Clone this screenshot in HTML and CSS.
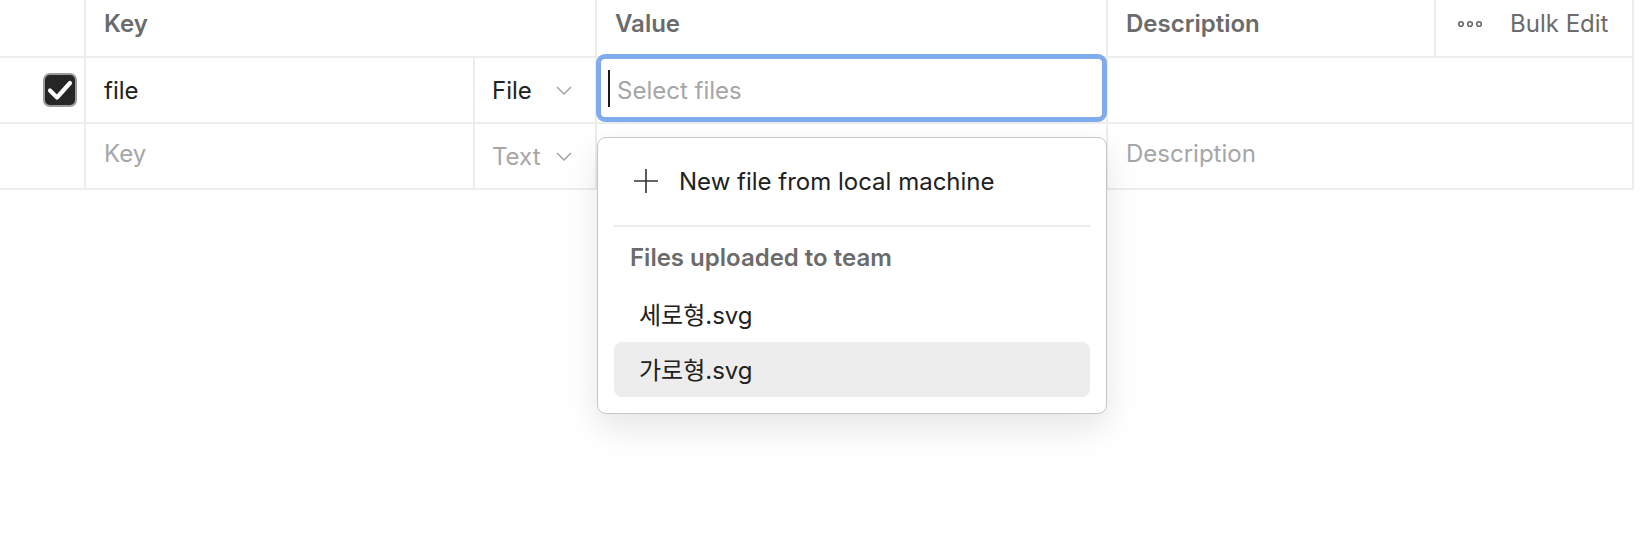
FILE: index.html
```html
<!DOCTYPE html>
<html lang="ko">
<head>
    <meta charset="UTF-8">
    <meta name="viewport" content="width=device-width, initial-scale=1.0">
    <title>Form data</title>
    <link rel="stylesheet" href="styles.css">
</head>
<body>
    <div class="params-table">
        <!-- header -->
        <div class="cell head check-col"></div>
        <div class="cell head span-2">Key</div>
        <div class="cell head">Value</div>
        <div class="cell head">Description</div>
        <div class="cell head bulk">
            <svg class="dots" width="26" height="8" viewBox="0 0 26 8">
                <circle cx="4" cy="4" r="2.3" />
                <circle cx="13" cy="4" r="2.3" />
                <circle cx="22" cy="4" r="2.3" />
            </svg>
            <span>Bulk Edit</span>
        </div>

        <!-- row 1 -->
        <div class="cell check-col">
            <span class="checkbox">
                <svg width="30" height="30" viewBox="0 0 30 30">
                    <path d="M5 15.5 L12 22.5 L25 8" />
                </svg>
            </span>
        </div>
        <div class="cell">file</div>
        <div class="cell type">
            <span>File</span>
            <svg class="chevron" width="16" height="9" viewBox="0 0 16 9"><path d="M1 1 L8 8 L15 1" /></svg>
        </div>
        <div class="cell value-cell">
            <div class="file-input">
                <span class="caret"></span>
                <span class="placeholder">Select files</span>
            </div>

            <div class="dropdown">
                <div class="dd-item new-file">
                    <svg class="plus" width="24" height="24" viewBox="0 0 24 24"><path d="M12 0 V24 M0 12 H24" /></svg>
                    <span>New file from local machine</span>
                </div>
                <div class="dd-sep"></div>
                <div class="dd-group">Files uploaded to team</div>
                <div class="dd-item file">세로형.svg</div>
                <div class="dd-item file active">가로형.svg</div>
            </div>
        </div>
        <div class="cell span-2"></div>

        <!-- row 2 (empty) -->
        <div class="cell check-col"></div>
        <div class="cell placeholder-cell">Key</div>
        <div class="cell type placeholder-cell">
            <span>Text</span>
            <svg class="chevron" width="16" height="9" viewBox="0 0 16 9"><path d="M1 1 L8 8 L15 1" /></svg>
        </div>
        <div class="cell"></div>
        <div class="cell span-2 placeholder-cell">Description</div>
    </div>
</body>
</html>
```

FILE: styles.css
```css
html, body {
    height: 100%;
}

body {
    margin: 0;
    padding: 0;
    background: #fff;
    font-family: Inter, "Noto Sans CJK KR", sans-serif;
    font-size: 24px;
    color: #212121;
}

.params-table {
    display: grid;
    grid-template-columns: 86px 389px 122px 511px 328px 198px;
    grid-template-rows: 58px 66px 66px;
    width: 1634px;
}

.cell {
    box-sizing: border-box;
    border-right: 2px solid #ededed;
    border-bottom: 2px solid #ededed;
    display: flex;
    align-items: center;
    padding-left: 18px;
}

.span-2 {
    grid-column: span 2;
}

.head {
    font-weight: 600;
    color: #6b6b6b;
    padding-bottom: 9px;
}

.check-col {
    justify-content: flex-end;
    padding: 0 7px 0 0;
}

.bulk {
    font-weight: 400;
    padding-left: 21px;
    gap: 27px;
}

.dots circle {
    fill: none;
    stroke: #6b6b6b;
    stroke-width: 1.6;
}

.checkbox {
    width: 34px;
    height: 34px;
    box-sizing: border-box;
    background: #262626;
    border: 2px solid #9b9b9b;
    border-radius: 7px;
    display: flex;
    align-items: center;
    justify-content: center;
}

.checkbox path {
    fill: none;
    stroke: #fff;
    stroke-width: 4.2;
    stroke-linecap: round;
    stroke-linejoin: round;
}

.type {
    padding-left: 17px;
    padding-right: 23px;
    justify-content: space-between;
}

.chevron path {
    fill: none;
    stroke: #a3a3a3;
    stroke-width: 1.5;
}

.placeholder-cell {
    color: #a6a6a6;
    padding-bottom: 5px;
}

.type.placeholder-cell {
    padding-bottom: 0;
}

.value-cell {
    position: relative;
}

/* focused input sits over the cell borders */
.file-input {
    position: absolute;
    top: -4px;
    left: -1px;
    right: -1px;
    bottom: 0;
    border: 5px solid #80abed;
    border-radius: 9px;
    background: #fff;
    display: flex;
    align-items: center;
    padding-left: 7px;
}

.caret {
    width: 2px;
    height: 37px;
    background: #1a1a1a;
    margin-right: 7px;
}

.placeholder {
    color: #a6a6a6;
    padding-top: 4px;
}

.dropdown {
    position: absolute;
    top: 79px;
    left: 0;
    width: 510px;
    box-sizing: border-box;
    background: #fff;
    border: 1px solid #c6c6c6;
    border-radius: 9px;
    box-shadow: 0 14px 34px rgba(0, 0, 0, 0.10);
    padding: 16px 16px 16px;
    z-index: 2;
}

.dd-item {
    height: 54px;
    display: flex;
    align-items: center;
    border-radius: 8px;
}

.new-file {
    padding-left: 20px;
    gap: 21px;
}

.plus path {
    stroke: #333;
    stroke-width: 1.6;
}

.dd-sep {
    height: 2px;
    background: #ebebeb;
    margin-top: 17px;
}

.dd-group {
    height: 61px;
    display: flex;
    align-items: center;
    padding-left: 16px;
    font-weight: 600;
    color: #6b6b6b;
}

.file {
    padding-left: 25px;
    padding-bottom: 3px;
    box-sizing: border-box;
}

.active {
    height: 55px;
    background: #ededed;
}
```
